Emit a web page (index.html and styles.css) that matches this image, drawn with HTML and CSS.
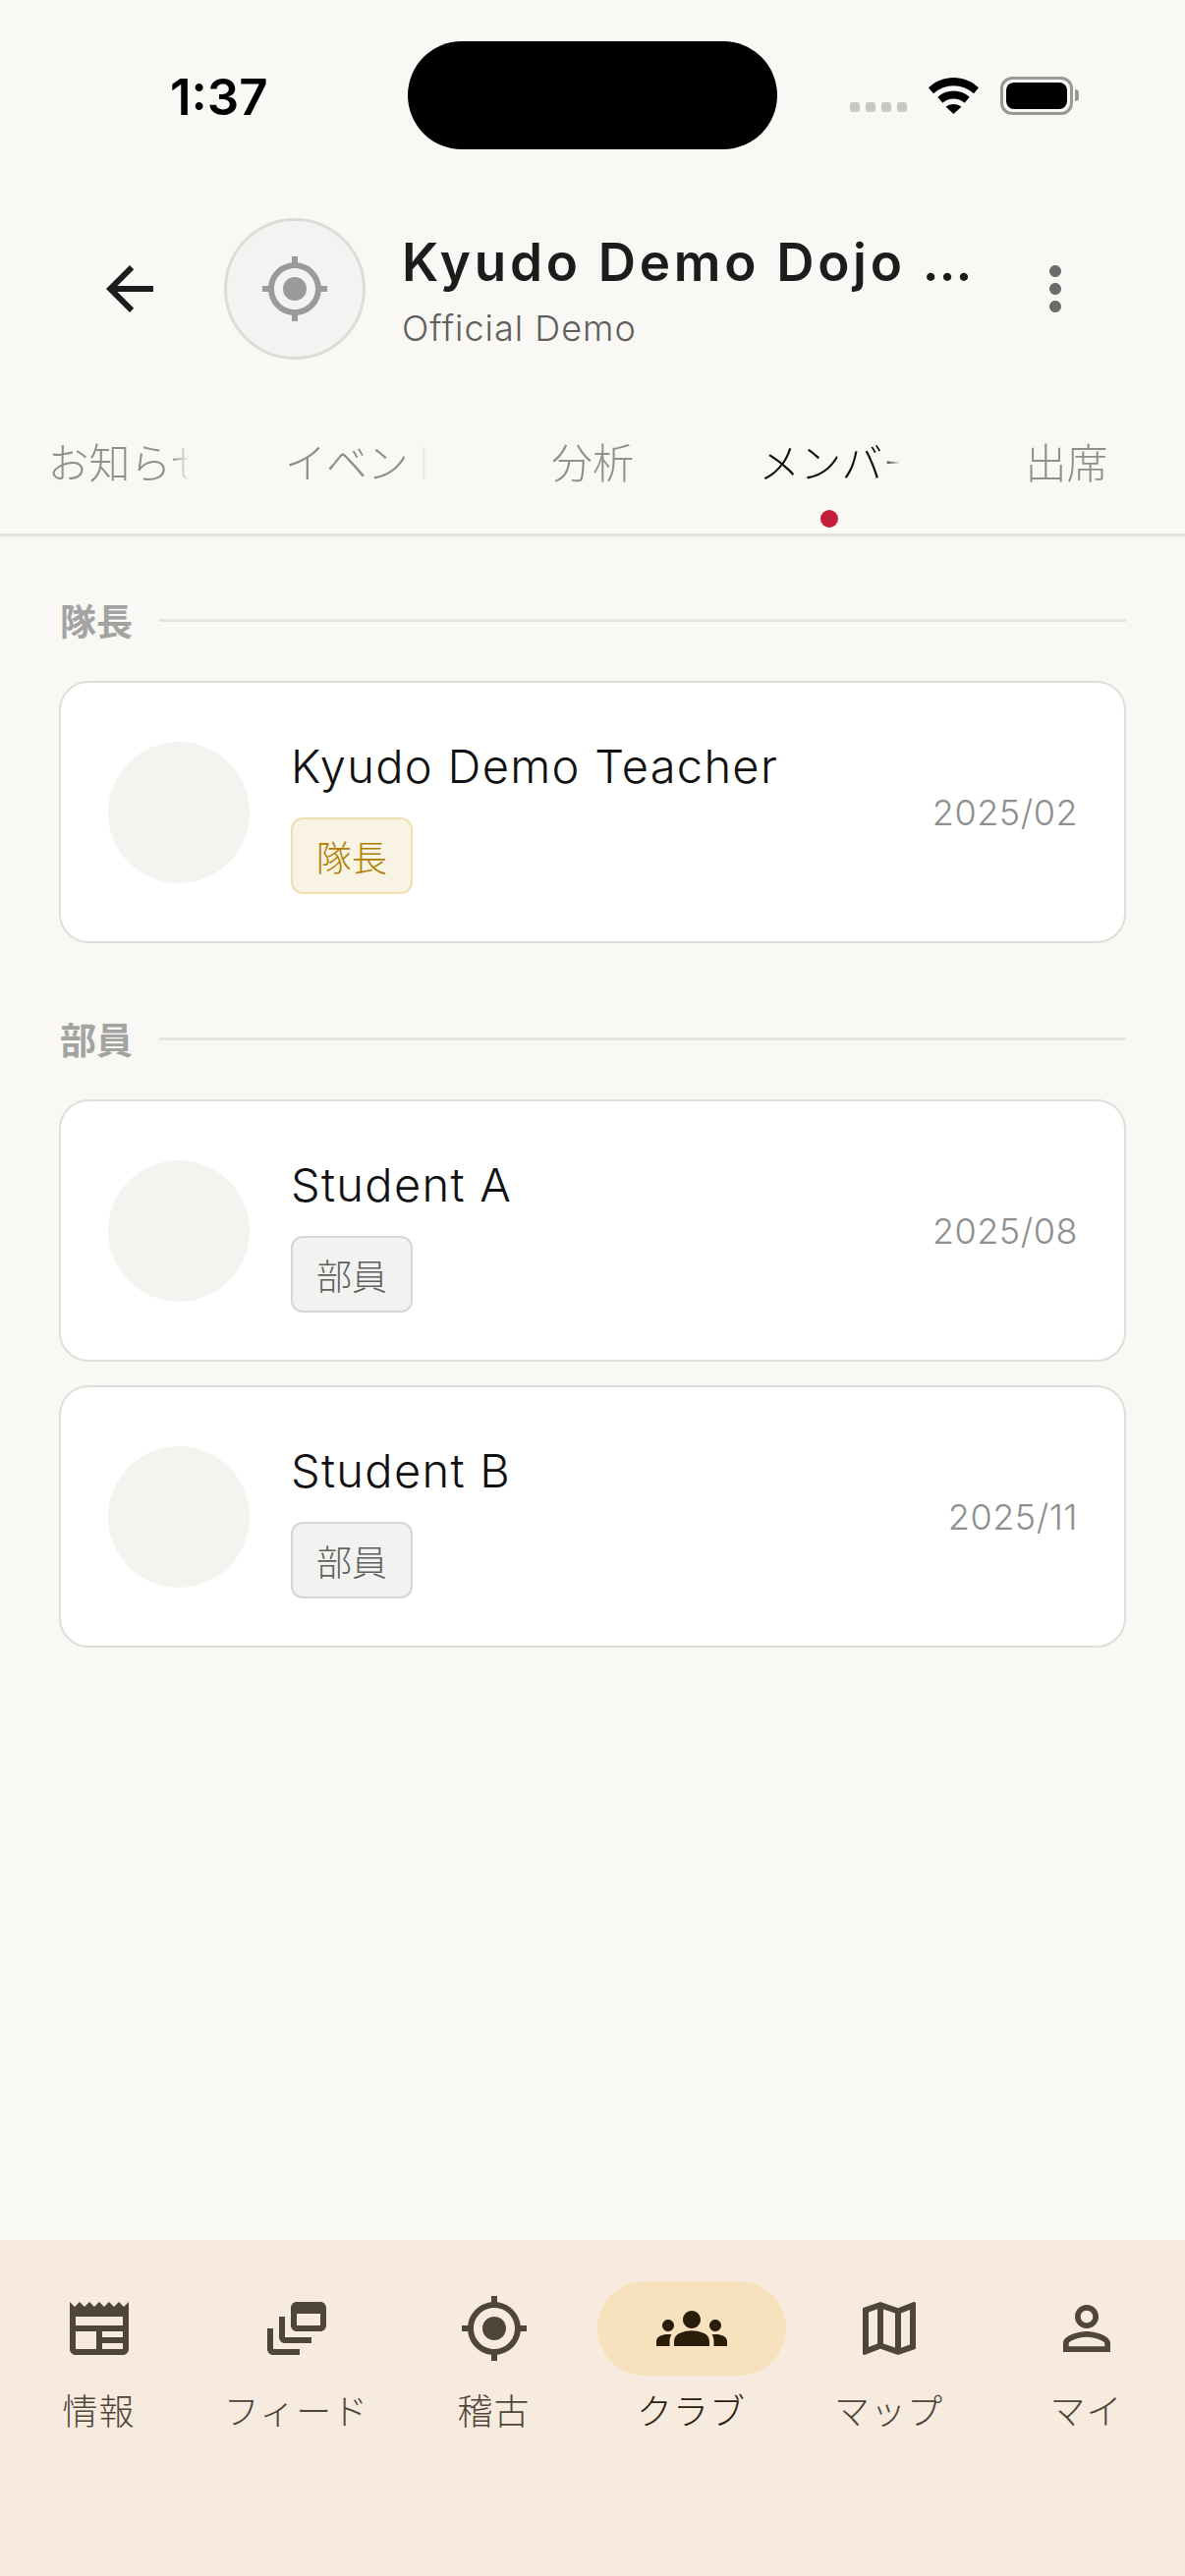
FILE: index.html
```html
<!DOCTYPE html>
<html lang="ja">
<head>
<meta charset="utf-8">
<title>Kyudo Demo Dojo</title>
<link rel="stylesheet" href="styles.css">
</head>
<body>
<div class="app">
  <div class="status">
    <span class="time">1:37</span>
    <div class="island"></div>
    <div class="status-right">
      <div class="signal"><i></i><i></i><i></i><i></i></div>
      <svg class="wifi" viewBox="0 0 51 37"><path d="M25.5 0C35 0 44 3.7 51 10.2l-5 6C40.200 11 33 8.200 25.500 8.200S10.800 11 5 16.200l-5-6C7 3.700 16 0 25.500 0z"/><path d="M25.500 13.500c6 0 11.700 2.200 16.200 6.200l-5 6c-3.200-2.700-7.100-4.200-11.200-4.200s-8 1.500-11.200 4.200l-5-6c4.500-4 10.200-6.200 16.200-6.200z"/><path d="M25.500 27c3 0 5.600 1 7.900 2.800L25.500 37l-7.900-7.200c2.300-1.800 4.900-2.800 7.900-2.800z"/></svg>
      <div class="battery"><div class="battery-fill"></div></div>
    </div>
  </div>

  <header class="header">
    <svg class="icon back" viewBox="0 0 24 24"><path d="M20 11H7.830l5.590-5.590L12 4l-8 8 8 8 1.410-1.410L7.830 13H20v-2z"/></svg>
    <div class="club-avatar">
      <svg class="icon club-icon" viewBox="0 0 24 24"><path d="M12 8c-2.210 0-4 1.790-4 4s1.790 4 4 4 4-1.790 4-4-1.790-4-4-4zm8.940 3c-.46-4.170-3.770-7.480-7.940-7.940V1h-2v2.060C6.830 3.520 3.520 6.830 3.060 11H1v2h2.060c.46 4.170 3.770 7.480 7.940 7.940V23h2v-2.060c4.170-.46 7.480-3.770 7.940-7.940H23v-2h-2.060zM12 19c-3.870 0-7-3.130-7-7s3.130-7 7-7 7 3.130 7 7-3.130 7-7 7z"/></svg>
    </div>
    <div class="club-text">
      <div class="club-name">Kyudo Demo Dojo …</div>
      <div class="club-sub">Official Demo</div>
    </div>
    <svg class="icon more" viewBox="0 0 24 24"><path d="M12 8c1.100 0 2-.9 2-2s-.9-2-2-2-2 .9-2 2 .9 2 2 2zm0 2c-1.100 0-2 .9-2 2s.9 2 2 2 2-.9 2-2-.9-2-2-2zm0 6c-1.100 0-2 .9-2 2s.9 2 2 2 2-.9 2-2-.9-2-2-2z"/></svg>
  </header>

  <nav class="tabs">
    <div class="tab"><span class="tab-label">お知らせ</span></div>
    <div class="tab"><span class="tab-label">イベント</span></div>
    <div class="tab"><span class="tab-label">分析</span></div>
    <div class="tab tab-active"><span class="tab-label">メンバー</span><span class="tab-dot"></span></div>
    <div class="tab"><span class="tab-label">出席</span></div>
  </nav>

  <main class="content">
    <section class="section">
      <div class="section-head"><span class="section-title">隊長</span><span class="section-line"></span></div>
      <div class="member">
        <div class="member-avatar"></div>
        <div class="member-info">
          <div class="member-name">Kyudo Demo Teacher</div>
          <span class="badge badge-captain">隊長</span>
        </div>
        <div class="member-date">2025/02</div>
      </div>
    </section>
    <section class="section">
      <div class="section-head"><span class="section-title">部員</span><span class="section-line"></span></div>
      <div class="member">
        <div class="member-avatar"></div>
        <div class="member-info">
          <div class="member-name">Student A</div>
          <span class="badge">部員</span>
        </div>
        <div class="member-date">2025/08</div>
      </div>
      <div class="member">
        <div class="member-avatar"></div>
        <div class="member-info">
          <div class="member-name">Student B</div>
          <span class="badge">部員</span>
        </div>
        <div class="member-date">2025/11</div>
      </div>
    </section>
  </main>

  <footer class="bottom">
    <div class="nav-item">
      <div class="nav-icon"><svg class="icon" viewBox="0 0 24 24"><path d="M22 3l-1.670 1.670L18.670 3 17 4.670 15.330 3l-1.660 1.670L12 3l-1.670 1.670L8.670 3 7 4.670 5.330 3 3.670 4.670 2 3v16c0 1.100.9 2 2 2h16c1.100 0 2-.9 2-2V3zM11 19H4v-6h7v6zm9 0h-7v-2h7v2zm0-4h-7v-2h7v2zm0-4H4V8h16v3z"/></svg></div>
      <span class="nav-label">情報</span>
    </div>
    <div class="nav-item">
      <div class="nav-icon"><svg class="icon" viewBox="0 0 24 24"><path d="M8 8H6v7c0 1.100.9 2 2 2h9v-2H8V8z"/><path d="M20 3h-8c-1.100 0-2 .9-2 2v6c0 1.100.9 2 2 2h8c1.100 0 2-.9 2-2V5c0-1.100-.9-2-2-2zm0 8h-8V7h8v4z"/><path d="M4 12H2v7c0 1.100.9 2 2 2h9v-2H4v-7z"/></svg></div>
      <span class="nav-label">フィード</span>
    </div>
    <div class="nav-item">
      <div class="nav-icon"><svg class="icon" viewBox="0 0 24 24"><path d="M12 8c-2.210 0-4 1.790-4 4s1.790 4 4 4 4-1.790 4-4-1.790-4-4-4zm8.940 3c-.46-4.170-3.770-7.480-7.940-7.940V1h-2v2.060C6.830 3.520 3.520 6.830 3.060 11H1v2h2.060c.46 4.170 3.770 7.480 7.940 7.940V23h2v-2.060c4.170-.46 7.480-3.770 7.940-7.940H23v-2h-2.060zM12 19c-3.870 0-7-3.130-7-7s3.130-7 7-7 7 3.130 7 7-3.130 7-7 7z"/></svg></div>
      <span class="nav-label">稽古</span>
    </div>
    <div class="nav-item nav-active">
      <div class="nav-icon"><svg class="icon" viewBox="0 0 24 24"><path d="M12 12.750c1.630 0 3.070.39 4.240.9 1.080.48 1.760 1.560 1.760 2.730V18H6v-1.610c0-1.180.68-2.260 1.760-2.730 1.170-.52 2.610-.91 4.240-.91zM4 13c1.100 0 2-.9 2-2s-.9-2-2-2-2 .9-2 2 .9 2 2 2zm1.130 1.100C4.760 14.040 4.390 14 4 14c-.99 0-1.930.21-2.780.58C.48 14.900 0 15.620 0 16.430V18h4.500v-1.610c0-.83.23-1.610.63-2.290zM20 13c1.100 0 2-.9 2-2s-.9-2-2-2-2 .9-2 2 .9 2 2 2zm4 3.430c0-.81-.48-1.530-1.220-1.850C21.930 14.210 20.990 14 20 14c-.39 0-.76.04-1.130.1.4.68.63 1.460.63 2.290V18H24v-1.570zM12 6c1.660 0 3 1.340 3 3s-1.340 3-3 3-3-1.340-3-3 1.340-3 3-3z"/></svg></div>
      <span class="nav-label">クラブ</span>
    </div>
    <div class="nav-item">
      <div class="nav-icon"><svg class="icon" viewBox="0 0 24 24"><path d="M20.500 3l-.16.03L15 5.100 9 3 3.360 4.900c-.21.07-.36.25-.36.48V20.500c0 .28.22.5.5.5l.16-.03L9 18.900l6 2.100 5.640-1.900c.21-.07.36-.25.36-.48V3.500c0-.28-.22-.5-.5-.5zM10 5.470l4 1.400v11.660l-4-1.400V5.470zm-5 .99l3-1.010v11.700l-3 1.160V6.460zm14 11.080l-3 1.010V6.860l3-1.160v11.840z"/></svg></div>
      <span class="nav-label">マップ</span>
    </div>
    <div class="nav-item">
      <div class="nav-icon"><svg class="icon" viewBox="0 0 24 24"><path d="M12 5.900c1.160 0 2.100.94 2.100 2.100s-.94 2.100-2.100 2.100S9.900 9.160 9.900 8s.94-2.100 2.100-2.100m0 9c2.970 0 6.100 1.460 6.100 2.100v1.100H5.900V17c0-.64 3.130-2.100 6.100-2.100M12 4C9.790 4 8 5.790 8 8s1.790 4 4 4 4-1.790 4-4-1.790-4-4-4zm0 9c-2.670 0-8 1.340-8 4v3h16v-3c0-2.660-5.330-4-8-4z"/></svg></div>
      <span class="nav-label">マイ</span>
    </div>
  </footer>
</div>
</body>
</html>
```
FILE: styles.css
```css
* { box-sizing: border-box; }
html, body { margin: 0; padding: 0; }
body {
  background: #faf8f5;
  font-family: "Inter", "Noto Sans CJK JP", sans-serif;
  color: #1c1c1c;
}
.app {
  width: 1206px;
  height: 2622px;
  display: flex;
  flex-direction: column;
  overflow: hidden;
  position: relative;
}
.icon { display: block; width: 72px; height: 72px; fill: currentColor; flex: none; }

/* status bar */
.status {
  height: 196px;
  flex: none;
  display: flex;
  align-items: center;
  justify-content: space-between;
  padding: 0 114px 0 173px;
}
.time { font-size: 51px; font-weight: 600; color: #000; }
.island {
  position: absolute;
  left: 415px;
  top: 42px;
  width: 376px;
  height: 110px;
  border-radius: 55px;
  background: #000;
}
.status-right { display: flex; align-items: center; margin-top: -2px; }
.signal { display: flex; gap: 6px; margin: 24px 22px 0 0; }
.signal i { display: block; width: 10px; height: 10px; border-radius: 3px; background: #c9c8c4; }
.wifi { display: block; width: 51px; height: 37px; fill: #000; margin: 0 22px 0 0; }
.battery {
  position: relative;
  width: 74px;
  height: 39px;
  border: 3px solid #999896;
  border-radius: 12px;
  padding: 3px;
}
.battery::after {
  content: "";
  position: absolute;
  right: -9px;
  top: 10px;
  width: 4px;
  height: 12px;
  border-radius: 0 4px 4px 0;
  background: #999896;
}
.battery-fill { width: 100%; height: 100%; background: #000; border-radius: 8px; }

/* header */
.header {
  height: 196px;
  flex: none;
  display: flex;
  align-items: center;
  padding: 0 96px 0 96px;
}
.back { color: #1c1c1c; }
.club-avatar {
  width: 144px;
  height: 144px;
  flex: none;
  margin-left: 60px;
  border-radius: 50%;
  background: #f4f3f1;
  border: 3px solid #dddcd9;
  display: flex;
  align-items: center;
  justify-content: center;
}
.club-icon { color: #9a9a98; }
.club-text { flex: 1; min-width: 0; margin-left: 37px; }
.club-name { font-size: 53px; line-height: 70px; font-weight: 600; letter-spacing: 3.700px; white-space: nowrap; color: #1c1c1c; }
.club-sub { font-size: 36px; line-height: 44px; margin-top: 10px; letter-spacing: 1px; font-weight: 300; color: #5f5f5d; }
.more { color: #6b6b6b; }

/* tabs */
.tabs {
  height: 154px;
  flex: none;
  display: flex;
  align-items: flex-start;
  padding-top: 50px;
  border-bottom: 3px solid #e5e3e0;
}
.tab { flex: 1; position: relative; display: flex; justify-content: center; }
.tab-label {
  display: block;
  width: 144px;
  font-size: 42px;
  line-height: 60px;
  font-weight: 300;
  text-align: center;
  white-space: nowrap;
  overflow: hidden;
  color: #8f8f8d;
  -webkit-mask-image: linear-gradient(to right, #000 126px, transparent 144px);
  mask-image: linear-gradient(to right, #000 126px, transparent 144px);
}
.tab-active .tab-label { color: #111; }
.tab-dot {
  position: absolute;
  left: 50%;
  top: 77px;
  width: 18px;
  height: 18px;
  margin-left: -9px;
  border-radius: 50%;
  background: #c41e3a;
}

/* members */
.content { flex: 1; min-height: 0; padding: 0 60px; }
.section { padding-top: 62px; }
.section + .section { padding-top: 74px; }
.section-head { display: flex; align-items: center; gap: 27px; height: 48px; margin-bottom: 37px; }
.section-title { font-size: 37px; line-height: 48px; font-weight: 700; margin: 4px 0 0 1px; color: #a3a3a1; }
.section-line { flex: 1; height: 3px; margin-top: -2px; background: #e6e4df; }
.member {
  height: 267px;
  display: flex;
  align-items: center;
  padding: 0 47px 0 48px;
  background: #fff;
  border: 2px solid #e0ded9;
  border-radius: 30px;
}
.member + .member { margin-top: 24px; }
.member-avatar { width: 144px; height: 144px; flex: none; border-radius: 50%; background: #f4f3ef; }
.member-info { flex: 1; min-width: 0; margin-left: 42px; display: flex; flex-direction: column; align-items: flex-start; padding-top: 2px; }
.member-name { font-size: 47px; line-height: 68px; letter-spacing: 1.300px; font-weight: 350; color: #111; margin: 1px 0 18px; }
.badge {
  display: flex;
  align-items: center;
  justify-content: center;
  width: 124px;
  height: 78px;
  border-radius: 12px;
  border: 2px solid #d6d6d4;
  background: #f2f2f0;
  font-size: 36px;
  font-weight: 300;
  color: #5f5f5d;
}
.badge-captain { background: #f8f3e3; border-color: #eedfb3; color: #b07f00; }
.member-date { font-size: 36px; letter-spacing: 0.500px; font-weight: 300; color: #8f8f8d; }

/* bottom nav */
.bottom {
  height: 342px;
  flex: none;
  display: flex;
  align-items: flex-start;
  padding-top: 42px;
  background: #f7ebdf;
}
.nav-item { flex: 1; display: flex; flex-direction: column; align-items: center; color: #4f4538; }
.nav-icon { width: 192px; height: 96px; border-radius: 48px; display: flex; align-items: center; justify-content: center; }
.nav-label { font-size: 36px; line-height: 50px; margin-top: 12px; letter-spacing: 1px; font-weight: 300; white-space: nowrap; }
.nav-active { color: #2a1d0a; }
.nav-active .nav-icon { background: #f8e1bd; }
```
